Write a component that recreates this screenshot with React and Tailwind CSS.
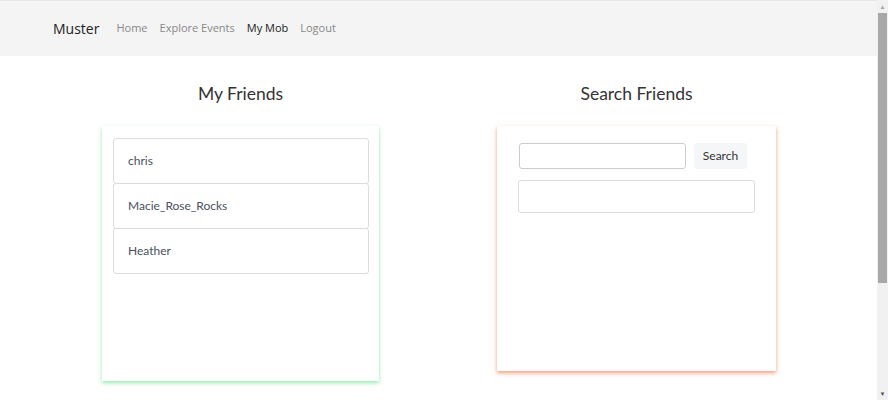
export default function App() {
  const friends = ["chris", "Macie_Rose_Rocks", "Heather"];

  return (
    <div className="h-[400px] overflow-hidden bg-white font-['Lato',sans-serif]">
      <div className="w-[877px]">
        <nav className="h-[56px] bg-[#f4f4f4] border-t border-[#e6e6e6] flex items-center pl-[53px] font-['Open_Sans',sans-serif]">
          <span className="text-[14px] text-[#222] mr-[17px]">Muster</span>
          <div className="flex gap-[12px] text-[11px]">
            <a className="text-[#888]">Home</a>
            <a className="text-[#888]">Explore Events</a>
            <a className="text-[#222]">My Mob</a>
            <a className="text-[#888]">Logout</a>
          </div>
        </nav>

        <div className="w-[792px] mx-auto grid grid-cols-2">
          <section className="flex flex-col items-center">
            <h2 className="mt-[26px] text-[17.5px] text-[#333] h-[24px] leading-[24px]">My Friends</h2>
            <div className="mt-[20px] w-[277px] h-[255px] bg-white shadow-[0_2px_4px_rgba(110,225,145,0.7)] pt-[12px] pl-[11px] pr-[10px]">
              {friends.map((f) => (
                <div
                  key={f}
                  className="h-[46px] -mb-px border border-[#dcdcdc] rounded-[3px] flex items-center pl-[14px] text-[12px] text-[#4a5060]"
                >
                  {f}
                </div>
              ))}
            </div>
          </section>

          <section className="flex flex-col items-center">
            <h2 className="mt-[26px] text-[17.5px] text-[#333] h-[24px] leading-[24px]">Search Friends</h2>
            <div className="mt-[20px] w-[279px] h-[245px] bg-white shadow-[0_2px_4px_rgba(240,130,90,0.8)] pt-[17px] px-[21px]">
              <div className="flex items-center gap-[8px] pl-px">
                <input className="w-[167px] h-[26px] border border-[#ccc] rounded-[3px] outline-none" />
                <button className="w-[53px] h-[26px] bg-[#f5f6f8] rounded-[3px] text-[12px] text-[#333]">
                  Search
                </button>
              </div>
              <div className="mt-[11px] h-[33px] border border-[#ddd] rounded-[3px]"></div>
            </div>
          </section>
        </div>
      </div>

      {/* window scrollbar */}
      <div className="fixed top-0 right-0 w-[11px] h-[400px] bg-[#f1f1f1] flex flex-col items-center">
        <span className="mt-[4px] text-[6px] leading-[6px] text-[#a3a3a3]">▲</span>
        <div className="mt-[3px] w-[9px] h-[270px] bg-[#a8a8a8]"></div>
        <span className="mt-auto mb-[3px] text-[6px] leading-[6px] text-[#505050]">▼</span>
      </div>
    </div>
  );
}
